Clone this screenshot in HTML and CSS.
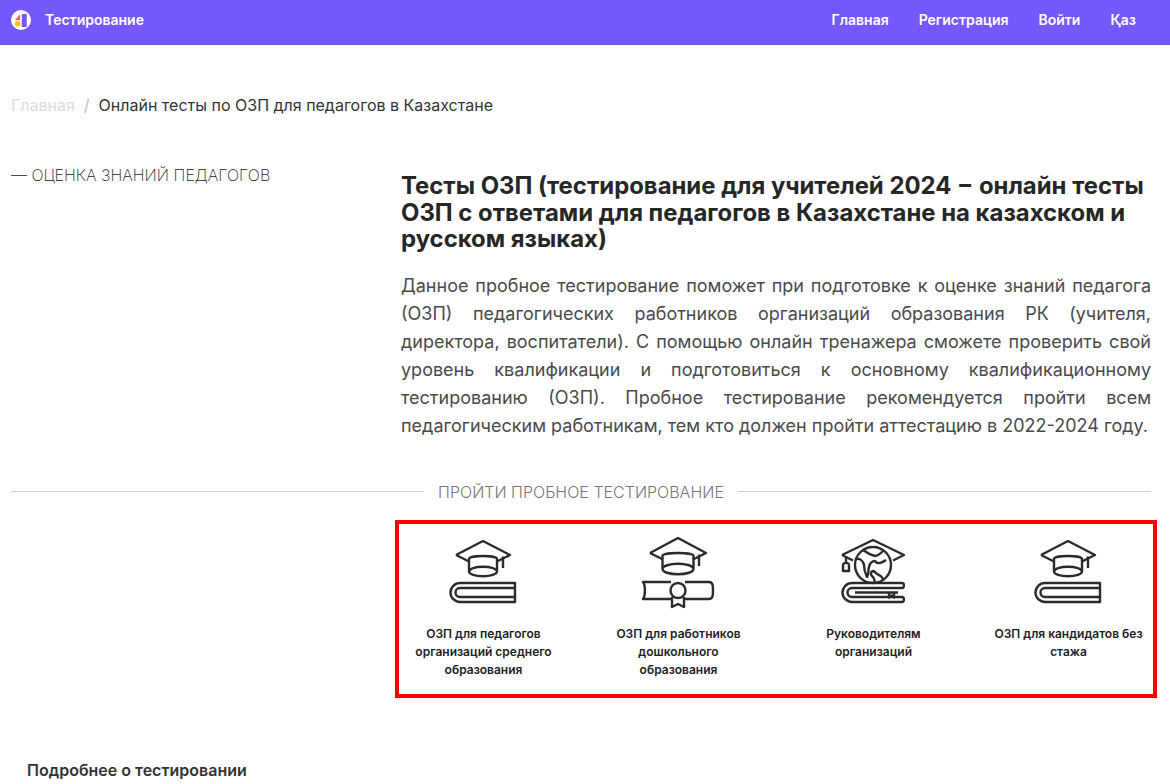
FILE: index.html
```html
<!DOCTYPE html>
<html lang="ru">
<head>
<meta charset="utf-8">
<title>Тесты ОЗП</title>
<link rel="stylesheet" href="styles.css">
</head>
<body>
<header class="nav">
  <a class="brand" href="#">
    <svg class="logo" viewBox="0 0 20 20" width="20" height="20">
      <circle cx="10" cy="10" r="10" fill="#fff"/>
      <path d="M9 4.500V10H4z" fill="#f0565b"/>
      <circle cx="6.700" cy="13.800" r="2.900" fill="#f9c22e"/>
      <rect x="10.800" y="4" width="5" height="13" rx="0.600" fill="#7558fb"/>
    </svg>
    <span>Тестирование</span>
  </a>
  <nav class="menu">
    <a href="#">Главная</a>
    <a href="#">Регистрация</a>
    <a href="#">Войти</a>
    <a href="#">Қаз</a>
  </nav>
</header>

<main class="page">
  <div class="crumbs"><a href="#">Главная</a><i>/</i><span>Онлайн тесты по ОЗП для педагогов в Казахстане</span></div>

  <div class="intro">
    <aside class="side">— ОЦЕНКА ЗНАНИЙ ПЕДАГОГОВ</aside>
    <article class="body">
      <h1>Тесты ОЗП (тестирование для учителей 2024 − онлайн тесты ОЗП с ответами для педагогов в Казахстане на казахском и русском языках)</h1>
      <p>Данное пробное тестирование поможет при подготовке к оценке знаний педагога (ОЗП) педагогических работников организаций образования РК (учителя, директора, воспитатели). С помощью онлайн тренажера сможете проверить свой уровень квалификации и подготовиться к основному квалификационному тестированию (ОЗП). Пробное тестирование рекомендуется пройти всем педагогическим работникам, тем кто должен пройти аттестацию в 2022-2024 году.</p>
    </article>
  </div>

  <div class="divider"><span>ПРОЙТИ ПРОБНОЕ ТЕСТИРОВАНИЕ</span></div>

  <section class="cards">
    <a class="card" href="#">
      <svg class="ic" viewBox="1 0 80 74" width="80" height="74">
        <path d="M13 20 40 6l27 14-13 6.500M26 26.500 13 20"/>
        <path d="M26 36V24c0-4 28-4 28 0v12"/>
        <ellipse cx="40" cy="36.500" rx="14" ry="4.800"/>
        <path d="M60 21.500V33"/>
        <path d="M72 48H17a9.500 9.500 0 0 0 0 19h55z"/>
        <path d="M72 53H17a4.500 4.500 0 0 0 0 9h55"/>
      </svg>
      <span>ОЗП для педагогов организаций среднего образования</span>
    </a>
    <a class="card" href="#">
      <svg class="ic" viewBox="1 0 80 74" width="80" height="74">
        <path d="M12 18 40 3l28 15-13 6.500M25 24.500 12 18"/>
        <path d="M24.500 33V21c0-4 31-4 31 0v12"/>
        <ellipse cx="40" cy="34" rx="15.500" ry="5.300"/>
        <path d="M61 19.500V31"/>
        <path d="M33 47H5c2.500 3 2.500 14 0 17h28M47 64h24c4 0 4-4 4-8.500S75 47 71 47H47"/>
        <circle cx="40" cy="55.500" r="7.500"/>
        <path d="M34 62v10l6-3 6 3V62"/>
      </svg>
      <span>ОЗП для работников дошкольного образования</span>
    </a>
    <a class="card" href="#">
      <svg class="ic" viewBox="1 0 80 74" width="80" height="74">
        <path d="M9 20 40 5l31 15-11 5.500M20 25.500 9 20"/>
        <circle class="globe" cx="40" cy="30" r="18"/>
        <path d="M13 21.500V28M10 36v-5.500c0-3.500 6-3.500 6 0V36z"/>
        <path d="M30 15c4 3 8 5 12 6 3 0 5-2 8-5M23 24c4-1 7 2 8 6 0 4 1 8 3 12 2-3 1-7 2-10 1-4 3-6 6-6 2 3 5 3 11-1M42 48c-1-3 0-5-3-7-2-2-1-5 1-5 3 1 3 3 6 4 2 1 4 2 4 5"/>
        <path d="M69 48H19a9.500 9.500 0 0 0 0 19h50c2.500 0 2.500-5 0-5H19a4.500 4.500 0 0 1 0-9h50c2.500 0 2.500-5 0-5z"/>
        <path d="M22 57.500h43M56 58v4.500l2.500-2 2.500 2V58"/>
      </svg>
      <span>Руководителям организаций</span>
    </a>
    <a class="card" href="#">
      <svg class="ic" viewBox="1 0 80 74" width="80" height="74">
        <path d="M13 20 40 6l27 14-13 6.500M26 26.500 13 20"/>
        <path d="M26 36V24c0-4 28-4 28 0v12"/>
        <ellipse cx="40" cy="36.500" rx="14" ry="4.800"/>
        <path d="M60 21.500V33"/>
        <path d="M72 48H17a9.500 9.500 0 0 0 0 19h55z"/>
        <path d="M72 53H17a4.500 4.500 0 0 0 0 9h55"/>
      </svg>
      <span>ОЗП для кандидатов без стажа</span>
    </a>
  </section>

  <h2 class="more">Подробнее о тестировании</h2>
</main>
</body>
</html>
```

FILE: styles.css
```css
* { box-sizing: border-box; }
html, body { margin: 0; height: 784px; overflow: hidden; background: #fff; }
body { font-family: Inter, "Noto Sans", sans-serif; color: #2d2d2d; }
a { color: inherit; text-decoration: none; }

.nav {
  height: 45px;
  background: #7558fb;
  color: #fff;
  display: flex;
  align-items: center;
  justify-content: space-between;
  padding: 0 34px 6px 11px;
  font-size: 14px;
  font-weight: 600;
}
.brand { display: flex; align-items: center; gap: 14px; }
.logo { display: block; }
.menu { display: flex; gap: 30px; }

.page { padding: 0 19px 0 11px; }

.crumbs {
  margin-top: 49px;
  height: 22px;
  line-height: 22px;
  font-size: 16px;
  font-weight: 400;
  color: #333;
  display: flex;
}
.crumbs a { color: #dcdcdc; }
.crumbs i { font-style: normal; color: #bdbdbd; margin: 0 9px; }

.intro { display: flex; margin-top: 49px; }
.side {
  width: 390px;
  flex: none;
  font-size: 16px;
  font-weight: 200;
  line-height: 20px;
  color: #222;
}
.body { flex: 1; min-width: 0; padding-top: 8px; }
h1 {
  margin: 0;
  font-size: 23.900px;
  line-height: 26.500px;
  font-weight: 700;
  color: #262626;
}
.body p {
  margin: 19px 0 0;
  font-size: 18px;
  line-height: 28px;
  font-weight: 400;
  text-align: justify;
  color: #4a4a4a;
}

.divider {
  display: flex;
  align-items: center;
  gap: 14px;
  margin-top: 42px;
  font-size: 16px;
  line-height: 20px;
  font-weight: 300;
  color: #777;
}
.divider::before, .divider::after {
  content: "";
  flex: 1;
  height: 1px;
  background: #cfcfcf;
}

.cards {
  margin: 18px -6px 0 384px;
  border: 4px solid #f00;
  padding: 11px 2px 0;
  height: 178px;
  display: grid;
  grid-template-columns: repeat(4, 1fr);
  column-gap: 30px;
}
.card {
  display: flex;
  flex-direction: column;
  align-items: center;
  text-align: center;
  font-size: 12px;
  line-height: 18px;
  font-weight: 600;
  color: #222;
}
.card span { max-width: 155px; }
.ic {
  display: block;
  margin-bottom: 16px;
  fill: none;
  stroke: #2b2b2b;
  stroke-width: 2.400;
  stroke-linejoin: round;
}
.globe { fill: #fff; }

.more {
  margin: 62px 0 0 16px;
  font-size: 16px;
  line-height: 20px;
  font-weight: 600;
  color: #333;
}
```
